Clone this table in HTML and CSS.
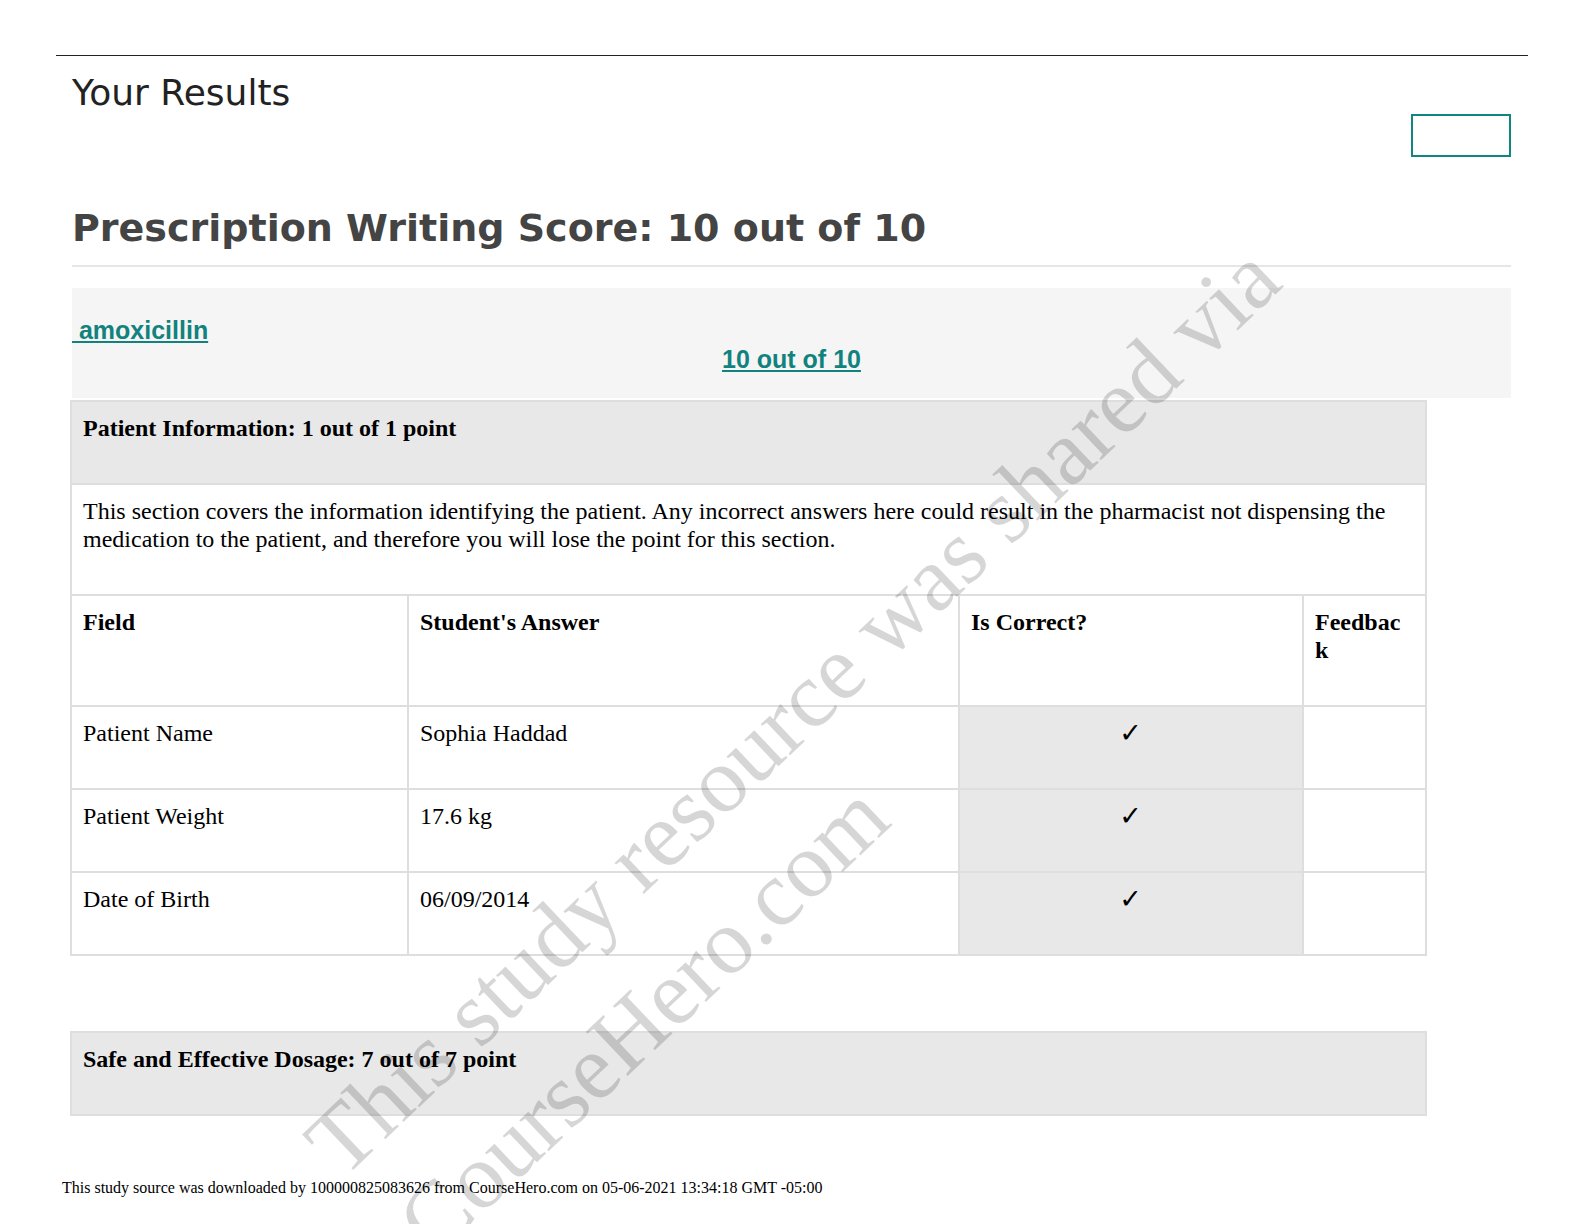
FILE: index.html
```html
<!DOCTYPE html>
<html lang="en">
<head>
<meta charset="utf-8">
<title>Your Results</title>
<link rel="stylesheet" href="styles.css">
</head>
<body>
<div class="page">
  <div class="sheet">
    <div class="inner">
      <h1 class="page-title">Your Results</h1>
      <div class="toolbar"><span class="teal-box"></span></div>
      <h2 class="score-title">Prescription Writing Score: 10 out of 10</h2>
      <div class="drug-panel">
        <a class="drug-link" href="#">&nbsp;amoxicillin</a>
        <div class="drug-score"><a class="drug-link" href="#">10 out of 10</a></div>
      </div>
      <table class="grade">
        <colgroup>
          <col class="c1"><col class="c2"><col class="c3"><col class="c4">
        </colgroup>
        <tr class="sec"><td colspan="4"><strong>Patient Information: 1 out of 1 point</strong></td></tr>
        <tr><td colspan="4">This section covers the information identifying the patient. Any incorrect answers here could result in the pharmacist not dispensing the medication to the patient, and therefore you will lose the point for this section.</td></tr>
        <tr class="head"><td>Field</td><td>Student's Answer</td><td>Is Correct?</td><td>Feedback</td></tr>
        <tr><td>Patient Name</td><td>Sophia Haddad</td><td class="ok">✓</td><td></td></tr>
        <tr><td>Patient Weight</td><td>17.6 kg</td><td class="ok">✓</td><td></td></tr>
        <tr><td>Date of Birth</td><td>06/09/2014</td><td class="ok">✓</td><td></td></tr>
      </table>
      <table class="grade second">
        <colgroup>
          <col class="c1"><col class="c2"><col class="c3"><col class="c4">
        </colgroup>
        <tr class="sec"><td colspan="4"><strong>Safe and Effective Dosage: 7 out of 7 point</strong></td></tr>
      </table>
    </div>
    <p class="footer">This study source was downloaded by 100000825083626 from CourseHero.com on 05-06-2021 13:34:18 GMT -05:00</p>
  </div>
  <div class="watermark">
    <div class="wm-line">This study resource was shared via</div>
    <div class="wm-line wm-second">CourseHero.com</div>
  </div>
</div>
</body>
</html>
```
FILE: styles.css
```css
html, body {
  margin: 0;
  padding: 0;
  overflow: hidden;
  background: #fff;
}
.page {
  position: relative;
  width: 1584px;
  height: 1224px;
  overflow: hidden;
}
.sheet {
  margin: 55px 56px 0 56px;
  border-top: 1px solid #222;
}
.inner {
  padding: 0 17px 0 16px;
}
.page-title {
  margin: 16px 0 0 0;
  font-family: "DejaVu Sans", sans-serif;
  font-weight: normal;
  font-size: 36px;
  line-height: 42px;
  color: #222;
}
.toolbar {
  display: flex;
  justify-content: flex-end;
}
.teal-box {
  display: block;
  width: 96px;
  height: 39px;
  border: 2px solid #118680;
}
.score-title {
  margin: 49px 0 0 0;
  padding-bottom: 15px;
  border-bottom: 2px solid #e6e6e6;
  font-family: "DejaVu Sans", sans-serif;
  font-weight: bold;
  font-size: 38px;
  line-height: 44px;
  color: #444;
}
.drug-panel {
  margin-top: 21px;
  background: #f5f5f5;
  padding: 28px 0 24px 0;
  font-family: "Liberation Sans", Arial, sans-serif;
  font-weight: bold;
  font-size: 25px;
  line-height: 29px;
}
.drug-link {
  color: #11827e;
  text-decoration: underline;
  text-decoration-thickness: 2px;
  text-underline-offset: 2px;
}
.drug-score {
  text-align: center;
}
.grade {
  border-collapse: collapse;
  table-layout: fixed;
  width: 1355px;
  margin: 2px 0 0 -2px;
  font-family: "Liberation Serif", "Times New Roman", serif;
  font-size: 24px;
  color: #000;
}
.grade td {
  border: 2px solid #dedede;
  padding: 12px 12px 41px 11px;
  vertical-align: top;
  line-height: 28px;
  overflow-wrap: anywhere;
  word-break: break-all;
}
.grade td[colspan] {
  word-break: normal;
  overflow-wrap: normal;
}
.grade .c1 { width: 337px; }
.grade .c2 { width: 551px; }
.grade .c3 { width: 344px; }
.grade .c4 { width: 123px; }
.grade .sec td {
  background: #e8e8e8;
}
.grade .head td {
  font-weight: bold;
}
.grade td.ok {
  background: #e8e8e8;
  text-align: center;
  font-family: "DejaVu Sans", sans-serif;
  font-size: 27px;
}
.second {
  margin-top: 75px;
}
.footer {
  margin: 63px 0 0 6px;
  font-family: "Liberation Serif", "Times New Roman", serif;
  font-size: 16px;
  line-height: 18px;
  color: #000;
}
.watermark {
  position: absolute;
  left: 342px;
  top: 1088px;
  transform-origin: 0 91px;
  transform: rotate(-43.5deg);
  font-family: "Liberation Serif", "Times New Roman", serif;
  font-size: 93px;
  line-height: 121px;
  white-space: nowrap;
  color: rgba(0, 0, 0, 0.16);
  pointer-events: none;
}
.wm-second {
  padding-left: 12px;
}
```
